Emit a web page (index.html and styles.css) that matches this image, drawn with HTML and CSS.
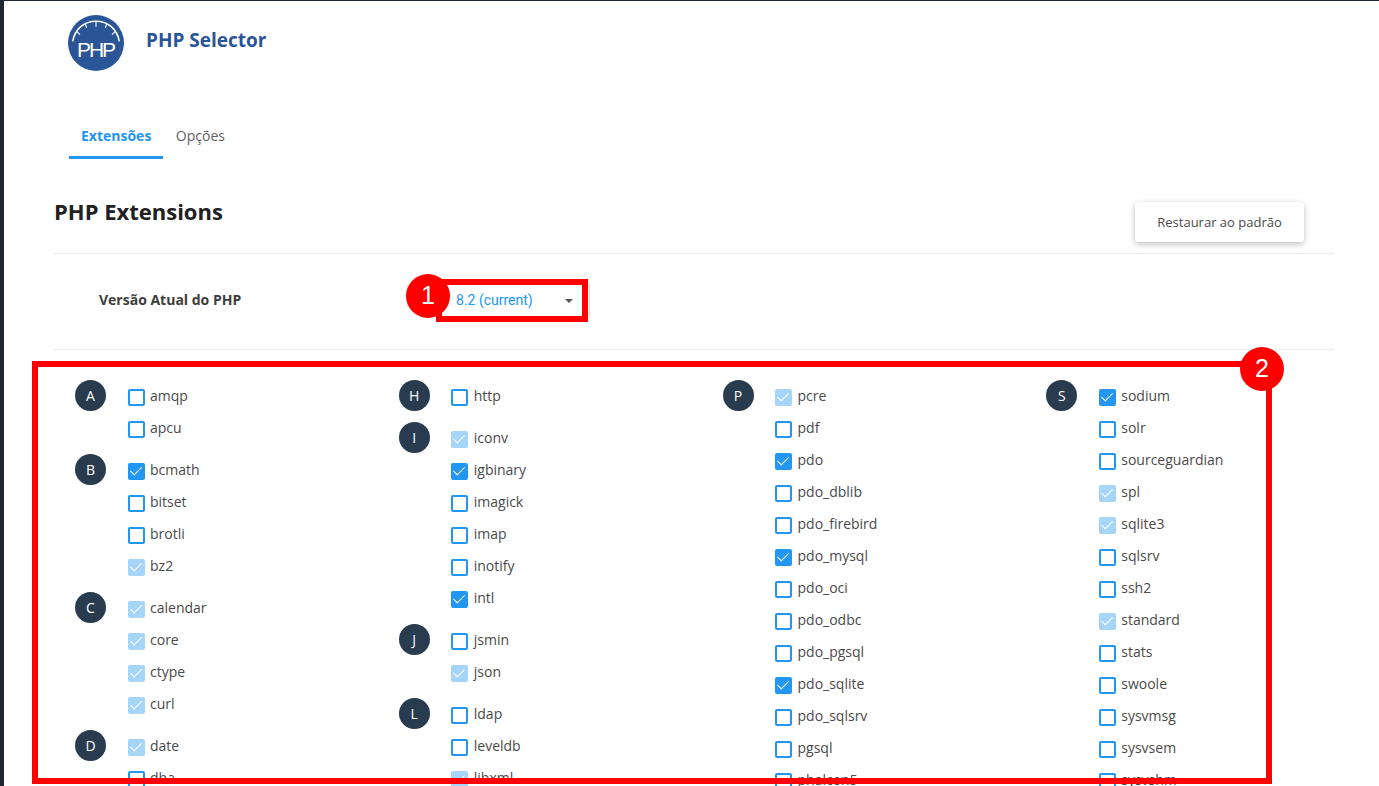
FILE: index.html
```html
<!DOCTYPE html>
<html lang="pt">
<head>
<meta charset="utf-8">
<title>PHP Selector</title>
<link rel="stylesheet" href="styles.css">
</head>
<body>
<div class="app">
  <header class="header">
    <svg class="logo" viewBox="0 0 56 56" width="56" height="56" aria-hidden="true">
      <circle cx="28" cy="28" r="28" fill="#2a5596"/>
      <path d="M4.7 26.300C7 14 16 6.300 28 6.300S49 14 51.300 26.300" fill="none" stroke="#fff" stroke-width="1.500"/>
      <path d="M28 6.300v5.500M17 8l1.700 5M39 8l-1.700 5M8.700 16.300l3.300 3.400M47.300 16.300l-3.300 3.400" stroke="#fff" stroke-width="1.100" fill="none"/>
      <text class="logo-text" x="27.500" y="42.300" text-anchor="middle">PHP</text>
    </svg>
    <h1 class="app-title">PHP Selector</h1>
  </header>
  <nav class="tabs">
    <a class="tab tab-active">Extensões</a>
    <a class="tab tab-next">Opções</a>
  </nav>
  <main class="content">
    <div class="section-head">
      <h2 class="section-title">PHP Extensions</h2>
      <button class="restore">Restaurar ao padrão</button>
    </div>
    <div class="version-row">
      <div class="version-label">Versão Atual do PHP</div>
      <div class="select"><span>8.2 (current)</span><i class="caret"></i></div>
    </div>
    <div class="columns">
      <div class="column">
        <div class="group"><div class="letter">A</div><ul class="list">
          <li class="item"><span class="box"></span>amqp</li>
          <li class="item"><span class="box"></span>apcu</li>
        </ul></div>
        <div class="group"><div class="letter">B</div><ul class="list">
          <li class="item"><span class="box on"></span>bcmath</li>
          <li class="item"><span class="box"></span>bitset</li>
          <li class="item"><span class="box"></span>brotli</li>
          <li class="item"><span class="box off"></span>bz2</li>
        </ul></div>
        <div class="group"><div class="letter">C</div><ul class="list">
          <li class="item"><span class="box off"></span>calendar</li>
          <li class="item"><span class="box off"></span>core</li>
          <li class="item"><span class="box off"></span>ctype</li>
          <li class="item"><span class="box off"></span>curl</li>
        </ul></div>
        <div class="group"><div class="letter">D</div><ul class="list">
          <li class="item"><span class="box off"></span>date</li>
          <li class="item"><span class="box"></span>dba</li>
        </ul></div>
      </div>
      <div class="column">
        <div class="group"><div class="letter">H</div><ul class="list">
          <li class="item"><span class="box"></span>http</li>
        </ul></div>
        <div class="group"><div class="letter">I</div><ul class="list">
          <li class="item"><span class="box off"></span>iconv</li>
          <li class="item"><span class="box on"></span>igbinary</li>
          <li class="item"><span class="box"></span>imagick</li>
          <li class="item"><span class="box"></span>imap</li>
          <li class="item"><span class="box"></span>inotify</li>
          <li class="item"><span class="box on"></span>intl</li>
        </ul></div>
        <div class="group"><div class="letter">J</div><ul class="list">
          <li class="item"><span class="box"></span>jsmin</li>
          <li class="item"><span class="box off"></span>json</li>
        </ul></div>
        <div class="group"><div class="letter">L</div><ul class="list">
          <li class="item"><span class="box"></span>ldap</li>
          <li class="item"><span class="box"></span>leveldb</li>
          <li class="item"><span class="box off"></span>libxml</li>
        </ul></div>
      </div>
      <div class="column">
        <div class="group"><div class="letter">P</div><ul class="list">
          <li class="item"><span class="box off"></span>pcre</li>
          <li class="item"><span class="box"></span>pdf</li>
          <li class="item"><span class="box on"></span>pdo</li>
          <li class="item"><span class="box"></span>pdo_dblib</li>
          <li class="item"><span class="box"></span>pdo_firebird</li>
          <li class="item"><span class="box on"></span>pdo_mysql</li>
          <li class="item"><span class="box"></span>pdo_oci</li>
          <li class="item"><span class="box"></span>pdo_odbc</li>
          <li class="item"><span class="box"></span>pdo_pgsql</li>
          <li class="item"><span class="box on"></span>pdo_sqlite</li>
          <li class="item"><span class="box"></span>pdo_sqlsrv</li>
          <li class="item"><span class="box"></span>pgsql</li>
          <li class="item"><span class="box"></span>phalcon5</li>
        </ul></div>
      </div>
      <div class="column">
        <div class="group"><div class="letter">S</div><ul class="list">
          <li class="item"><span class="box on"></span>sodium</li>
          <li class="item"><span class="box"></span>solr</li>
          <li class="item"><span class="box"></span>sourceguardian</li>
          <li class="item"><span class="box off"></span>spl</li>
          <li class="item"><span class="box off"></span>sqlite3</li>
          <li class="item"><span class="box"></span>sqlsrv</li>
          <li class="item"><span class="box"></span>ssh2</li>
          <li class="item"><span class="box off"></span>standard</li>
          <li class="item"><span class="box"></span>stats</li>
          <li class="item"><span class="box"></span>swoole</li>
          <li class="item"><span class="box"></span>sysvmsg</li>
          <li class="item"><span class="box"></span>sysvsem</li>
          <li class="item"><span class="box"></span>sysvshm</li>
        </ul></div>
      </div>
    </div>
  </main>
  <div class="mark mark-select"></div>
  <div class="mark mark-list"></div>
  <div class="badge badge-one">1</div>
  <div class="badge badge-two">2</div>
</div>
</body>
</html>
```
FILE: styles.css
```css
* { box-sizing: border-box; }
html, body { margin: 0; height: 786px; overflow: hidden; background: #fff; }
body { font-family: "Open Sans", sans-serif; color: #4a4a4a; font-size: 14px; }

.app {
  position: relative;
  height: 786px;
  overflow: hidden;
  border-left: 4px solid #1f2733;
  border-top: 1px solid #1f2733;
}

.header { display: flex; height: 113px; padding: 14px 0 0 64px; }
.logo { flex: none; }
.logo-text { font-family: "Liberation Sans", sans-serif; font-size: 21px; fill: #fff; letter-spacing: -2px; }
.app-title { margin: 11px 0 0 22px; font-size: 19px; line-height: 28px; font-weight: 700; color: #2a5596; }

.tabs { display: flex; height: 45px; margin-left: 65px; }
.tab { padding: 12px 12px 0; line-height: 19px; font-size: 14px; color: #5f5f5f; border-bottom: 3px solid transparent; }
.tab-active { color: #2196f3; font-weight: 700; border-bottom-color: #2196f3; }
.tab-next { margin-left: .5px; }

.content { margin: 0 45px 0 50px; }
.section-head { display: flex; justify-content: space-between; height: 95px; padding: 43px 30px 0 0; border-bottom: 1px solid #ececec; }
.section-title { margin: -6px 0 0; font-size: 22px; line-height: 30px; font-weight: 700; color: #212121; }
.restore {
  width: 169px; height: 40px; padding: 0; border: 0; border-radius: 3px; background: #fff;
  font-family: "Open Sans", sans-serif; font-size: 13px; color: #4a4a4a;
  box-shadow: 0 2px 6px rgba(0, 0, 0, .25);
}

.version-row { display: flex; height: 96px; padding-top: 29px; border-bottom: 1px solid #ececec; }
.version-label { width: 387px; height: 34px; padding-left: 45px; font-size: 14px; line-height: 34px; font-weight: 700; color: #3d3d3d; }
.select {
  display: flex; align-items: center; justify-content: space-between;
  width: 149px; height: 34px; padding: 0 16px 0 15px;
  border-right: 1px solid #dcdcdc;
  font-family: Roboto, sans-serif; font-size: 14px; color: #2196f3;
}
.caret { width: 0; height: 0; margin-top: 2px; border-left: 4.500px solid transparent; border-right: 4.500px solid transparent; border-top: 4.500px solid #555; }

.columns { display: grid; grid-template-columns: repeat(4, 323.75px); margin-left: 21px; padding-top: 30px; }
.group { display: flex; align-items: flex-start; margin-bottom: 10px; }
.letter {
  flex: none; width: 31px; height: 31px; margin-right: 21.5px; border-radius: 50%;
  background: #293b4e; color: #fff; font-size: 14px; line-height: 31px; text-align: center;
}
.list { margin: 0; padding: 0; list-style: none; }
.item { display: flex; align-items: center; height: 32px; line-height: 32px; white-space: nowrap; }

.box { position: relative; flex: none; width: 17px; height: 17px; margin: 3px 5.5px 0 0; border: 2px solid #2196f3; border-radius: 2px; background: #fff; }
.on { background: #2196f3; }
.off { background: #a6d5fa; border-color: #a6d5fa; }
.on::after, .off::after {
  content: ""; position: absolute; left: 3px; top: -1px; width: 5px; height: 10px;
  border: solid #fff; border-width: 0 1.750px 1.750px 0; transform: rotate(45deg);
}

.mark { position: absolute; border: 6px solid #f00; }
.mark-select { left: 432px; top: 278px; width: 152px; height: 43px; }
.mark-list { left: 28px; top: 360px; width: 1240px; height: 423px; }
.badge {
  position: absolute; width: 44px; height: 44px; border-radius: 50%; background: #f00; color: #fff;
  font-family: "Liberation Sans", sans-serif; font-size: 25px; line-height: 42px; text-align: center;
}
.badge-one { left: 402px; top: 273px; }
.badge-two { left: 1236px; top: 346px; }
```
